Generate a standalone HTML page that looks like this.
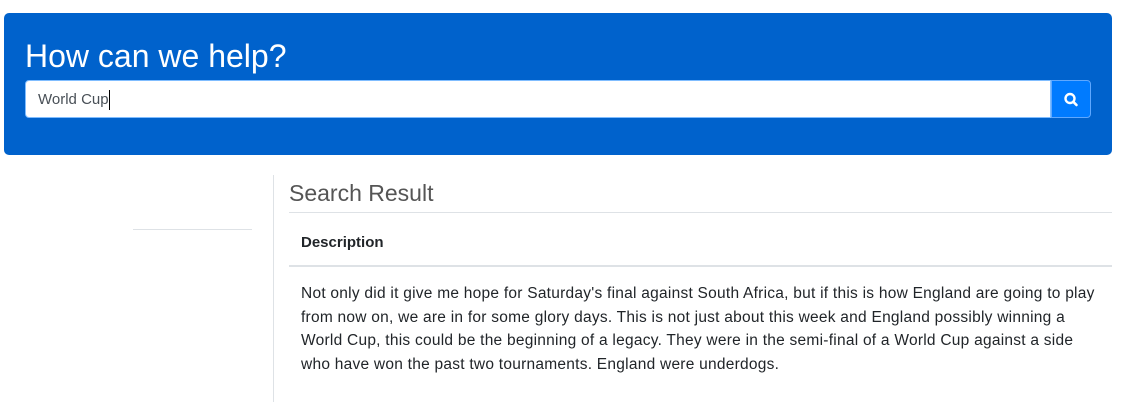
<!DOCTYPE html>
<html><head><style>
body{margin:0;width:1125px;height:402px;background:#fff;font-family:"Liberation Sans",sans-serif;position:relative;overflow:hidden}
.ban{position:absolute;left:4px;top:13px;width:1108px;height:142px;background:#0062cc;border-radius:5px}
h1{position:absolute;left:25px;top:36px;margin:0;font-weight:400;font-size:32px;color:#fff;line-height:40px}
.inp{position:absolute;left:25px;top:80px;width:1026px;height:38px;background:#fff;border-radius:4px 0 0 4px;box-sizing:border-box;border:1px solid #80bdff;font-size:15px;color:#495057;padding-left:12px;line-height:38px}
.btn{position:absolute;left:1051px;top:80px;width:40px;height:38px;background:#007bff;border:1px solid #5fa8ff;box-sizing:border-box;border-radius:0 4px 4px 0}
.l{position:absolute;background:#dee2e6}
</style></head><body>
<div class="ban"></div>
<h1>How can we help?</h1>
<div class="inp">World Cup<span style="display:inline-block;width:1px;height:20px;background:#000;vertical-align:middle"></span></div>
<div class="btn"><svg width="40" height="38" viewBox="0 0 40 38" style="position:absolute;left:-1px;top:-1px"><circle cx="19" cy="18.5" r="4.5" fill="none" stroke="#fff" stroke-width="2.4"/><path d="M22.3 21.8 L25.5 25" stroke="#fff" stroke-width="2.6" stroke-linecap="round"/></svg></div>
<div class="l" style="left:133px;top:229px;width:119px;height:1px"></div>
<div class="l" style="left:273px;top:175px;width:1px;height:227px"></div>
<div style="position:absolute;left:289px;top:178px;font-size:23px;color:#555;line-height:30px">Search Result</div>
<div class="l" style="left:289px;top:212px;width:823px;height:1px"></div>
<div style="position:absolute;left:301px;top:233px;font-size:15px;font-weight:700;color:#212529;line-height:20px">Description</div>
<div class="l" style="left:289px;top:265px;width:823px;height:2px"></div>
<div style="position:absolute;left:301px;top:282px;width:810px;white-space:nowrap;font-size:15.5px;letter-spacing:0.25px;color:#212529;line-height:23.5px">Not only did it give me hope for Saturday's final against South Africa, but if this is how England are going to play<br>from now on, we are in for some glory days. This is not just about this week and England possibly winning a<br>World Cup, this could be the beginning of a legacy. They were in the semi-final of a World Cup against a side<br>who have won the past two tournaments. England were underdogs.</div>
</body></html>
